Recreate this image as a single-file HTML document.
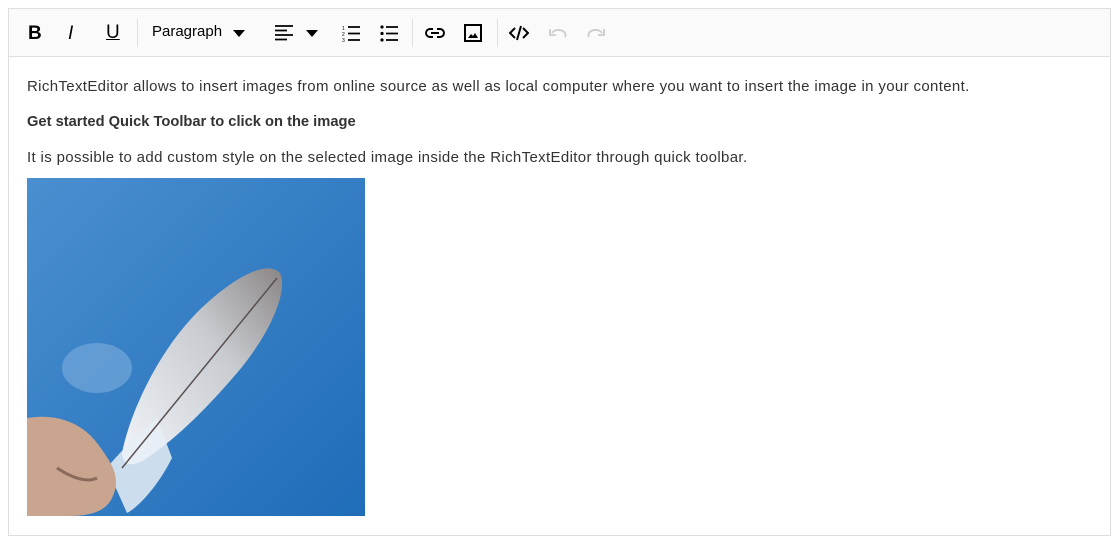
<!DOCTYPE html>
<html><head><style>
body{margin:0;background:#fff;font-family:"Liberation Sans",Roboto,sans-serif;}
.box{position:absolute;left:8px;top:8px;width:1101px;height:526px;border:1px solid #dedede;}
.tb{height:47px;background:#fafafa;border-bottom:1px solid #e0e0e0;position:relative;}
.tb > *{position:absolute;}
.sep{top:10px;width:1px;height:28px;background:#e0e0e0;}
.c{position:absolute;left:18px;top:0;color:#333;font-size:15px;letter-spacing:0.35px;}
p{margin:0;position:absolute;white-space:nowrap;}
</style></head><body>
<div class="box">
<div class="tb">
 <div style="left:19px;top:14px;font-weight:bold;font-size:19px;color:#000">B</div>
 <div style="left:59px;top:14px;font-style:italic;font-size:19px;color:#000">I</div>
 <div style="left:97px;top:13px;font-size:19px;color:#000;text-decoration:underline">U</div>
 <div class="sep" style="left:128px"></div>
 <div style="left:143px;top:14px;font-size:15px;color:#000">Paragraph</div>
 <svg style="left:224px;top:21px" width="12" height="7"><path d="M0 0h12L6 7z" fill="#000"/></svg>
 <svg style="left:266px;top:16px" width="18" height="16"><path d="M0 1h18M0 5.5h12M0 10h18M0 14.5h12" stroke="#000" stroke-width="1.8"/></svg>
 <svg style="left:297px;top:21px" width="12" height="7"><path d="M0 0h12L6 7z" fill="#000"/></svg>
 <svg style="left:333px;top:16px" width="18" height="17"><path d="M6 2h12M6 8.5h12M6 15h12" stroke="#000" stroke-width="1.8"/><text x="0" y="5" font-size="5" fill="#000">1</text><text x="0" y="11" font-size="5" fill="#000">2</text><text x="0" y="17" font-size="5" fill="#000">3</text></svg>
 <svg style="left:371px;top:16px" width="18" height="17"><circle cx="2" cy="2" r="1.6"/><circle cx="2" cy="8.5" r="1.6"/><circle cx="2" cy="15" r="1.6"/><path d="M6 2h12M6 8.5h12M6 15h12" stroke="#000" stroke-width="1.8"/></svg>
 <div class="sep" style="left:403px"></div>
 <svg style="left:416px;top:18px" width="20" height="12"><path d="M8 2H5a4 4 0 0 0 0 8h3M12 2h3a4 4 0 0 1 0 8h-3M6 6h8" stroke="#000" stroke-width="1.9" fill="none"/></svg>
 <svg style="left:455px;top:15px" width="18" height="18"><rect x="1" y="1" width="16" height="16" fill="none" stroke="#000" stroke-width="2"/><path d="M4 14l3-4 2 2 2-3 3 5z"/></svg>
 <div class="sep" style="left:488px"></div>
 <svg style="left:500px;top:16px" width="20" height="16"><path d="M6 3L1 8l5 5M14 3l5 5-5 5M12 1L8 15" stroke="#000" stroke-width="2" fill="none"/></svg>
 <svg style="left:539px;top:18px" width="20" height="12"><path d="M4 6a7 5 0 0 1 13 4M2 2v6h6" stroke="#ccc" stroke-width="1.8" fill="none"/></svg>
 <svg style="left:577px;top:18px" width="20" height="12"><path d="M16 6a7 5 0 0 0-13 4M18 2v6h-6" stroke="#ccc" stroke-width="1.8" fill="none"/></svg>
</div>
<div class="c">
<p style="top:69px">RichTextEditor allows to insert images from online source as well as local computer where you want to insert the image in your content.</p>
<p style="top:105px;font-weight:bold;letter-spacing:0;font-size:14.7px">Get started Quick Toolbar to click on the image</p>
<p style="top:140px">It is possible to add custom style on the selected image inside the RichTextEditor through quick toolbar.</p>
<svg style="position:absolute;left:0;top:169px" width="338" height="338">
<defs><linearGradient id="sky" x1="0" y1="0" x2="1" y2="1"><stop offset="0" stop-color="#4a8fd0"/><stop offset="1" stop-color="#1f6cb8"/></linearGradient>
<linearGradient id="fe" x1="0" y1="1" x2="1" y2="0"><stop offset="0" stop-color="#f2f5fa"/><stop offset=".6" stop-color="#c8cbd0"/><stop offset="1" stop-color="#8b8686"/></linearGradient></defs>
<rect width="338" height="338" fill="url(#sky)"/>
<ellipse cx="70" cy="190" rx="35" ry="25" fill="#8ab5e0" opacity=".5"/>
<path d="M95 275C105 225 140 160 180 125C210 98 240 82 253 95C262 115 240 160 210 195C180 230 150 260 120 280C105 290 96 288 95 275z" fill="url(#fe)"/>
<path d="M80 290C100 265 120 250 130 240L145 280C130 310 110 330 100 335z" fill="#e8eef6" opacity=".85"/>
<path d="M95 290L250 100" stroke="#5a5050" stroke-width="1.5"/>
<path d="M0 240C30 235 55 245 70 265C85 285 95 300 85 320C78 335 60 338 40 338H0z" fill="#c9a590"/>
<path d="M30 290C45 300 60 305 70 300" stroke="#8a6a5a" stroke-width="3" fill="none"/>
</svg>
</div>
</div>
</body></html>
